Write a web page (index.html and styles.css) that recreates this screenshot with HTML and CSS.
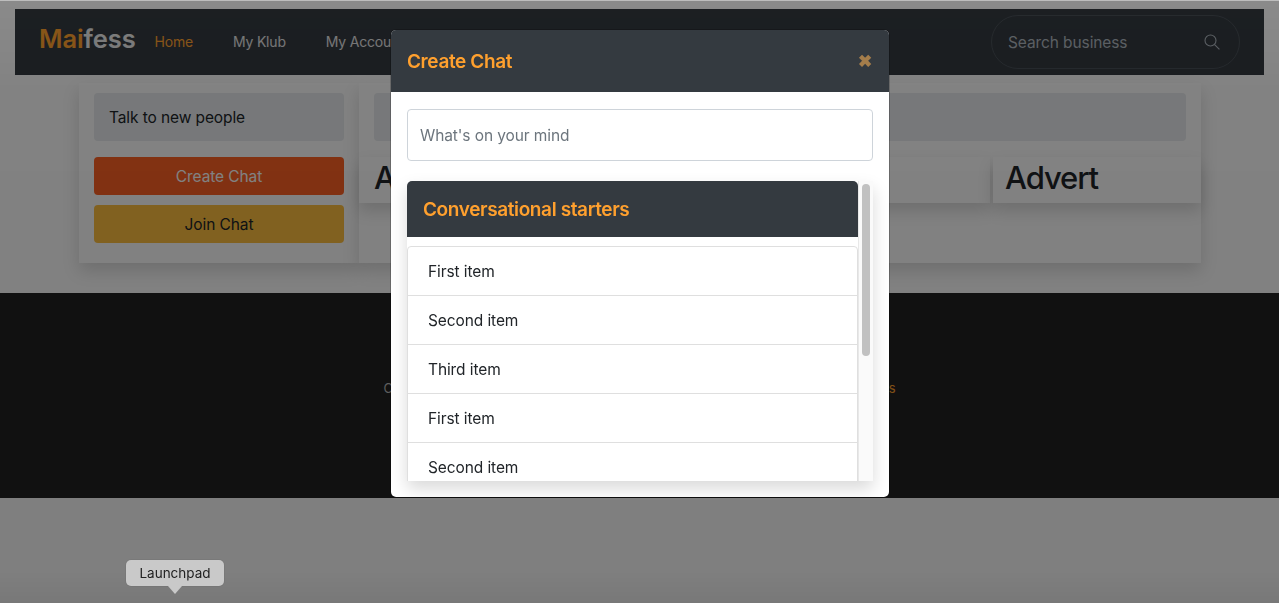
FILE: index.html
```html
<!DOCTYPE html>
<html lang="en">
<head>
    <meta charset="UTF-8">
    <title>Maifess</title>
    <link rel="stylesheet" href="styles.css">
</head>
<body>
<nav class="navbar">
    <a class="brand"><span class="brand-mai">Mai</span>fess</a>
    <ul class="nav-links">
        <li class="active">Home</li>
        <li>My Klub</li>
        <li>My Account</li>
    </ul>
    <div class="search">
        <span class="search-text">Search business</span>
        <svg width="16" height="16" viewBox="0 0 16 16" fill="none" stroke="currentColor" stroke-width="1.1">
            <circle cx="6.5" cy="6.5" r="5.5"/>
            <path d="M10.6 10.6 15.4 15.4"/>
        </svg>
    </div>
</nav>

<div class="content">
    <section class="card card-left">
        <div class="strip">Talk to new people</div>
        <a class="btn btn-create">Create Chat</a>
        <a class="btn btn-join">Join Chat</a>
    </section>
    <section class="card card-right">
        <div class="strip strip-empty"></div>
        <div class="adverts">
            <div class="advert advert-wide">Advert</div>
            <div class="advert advert-small">Advert</div>
        </div>
    </section>
</div>

<footer class="footer">
    <p>Copyright © 2021 Maifess. All rights reserved. Read our <span class="footer-link">Policies, Terms &amp; Conditions</span></p>
</footer>

<div class="backdrop"></div>

<div class="modal">
    <div class="modal-header">
        <h5>Create Chat</h5>
        <span class="close">&#10006;</span>
    </div>
    <div class="modal-body">
        <div class="mind-input">What's on your mind</div>
        <div class="starters">
            <div class="starters-main">
                <div class="starters-title">Conversational starters</div>
                <ul class="starters-list">
                    <li>First item</li>
                    <li>Second item</li>
                    <li>Third item</li>
                    <li>First item</li>
                    <li>Second item</li>
                </ul>
            </div>
            <div class="scroll-track"><div class="scroll-thumb"></div></div>
        </div>
    </div>
</div>

<div class="dock-tip">Launchpad</div>
</body>
</html>
```

FILE: styles.css
```css
* {
    margin: 0;
    padding: 0;
    box-sizing: border-box;
}

html, body {
    height: 603px;
    overflow: hidden;
}

body {
    background: #fff;
    color: #212529;
    font-family: Inter, "Liberation Sans", sans-serif;
    font-size: 15.5px;
    letter-spacing: -.1px;
    border-top: 1px solid #bdbdbd;
}

ul {
    list-style: none;
}

/* navbar */
.navbar {
    display: flex;
    align-items: center;
    height: 66px;
    margin: 8px 15px 0;
    padding: 0 24px 0 24px;
    background: #343a40;
}
.brand {
    font-size: 25.5px;
    font-weight: 600;
    color: #e8e8e8;
    margin-right: 19px;
    margin-top: -8px;
}
.brand-mai {
    color: #ffa02e;
}
.nav-links {
    display: flex;
    gap: 40px;
    font-size: 14px;
    letter-spacing: -.2px;
    color: #e0e0e0;
    flex: 1;
    margin-top: -2px;
}
.nav-links .active {
    color: #ffa02e;
}
.search {
    display: flex;
    align-items: center;
    justify-content: space-between;
    width: 249px;
    height: 54px;
    padding: 0 19px 0 16px;
    border: 1px solid #495057;
    border-radius: 27px;
    color: #adb5bd;
}

/* cards */
.content {
    display: flex;
    width: 1122px;
    height: 180px;
    margin: 8px auto 0 79px;
}
.card {
    background: #fff;
    padding: 10px 15px;
    box-shadow: 0 8px 16px rgba(0, 0, 0, .15);
}
.card-left {
    width: 280px;
}
.card-right {
    flex: 1;
    padding-left: 0;
    padding-right: 0;
}
.strip {
    height: 48px;
    padding: 15px 15px 0;
    background: #e9ecef;
    border-radius: 4px;
}
.strip-empty {
    margin: 0 15px;
}
.btn {
    display: block;
    height: 38px;
    margin-top: 10px;
    line-height: 40px;
    text-align: center;
    border-radius: 4px;
}
.strip + .btn {
    margin-top: 16px;
}
.btn-create {
    background: #ff6224;
    color: #fff;
}
.btn-join {
    background: #ffc040;
}
.adverts {
    display: flex;
    gap: 3px;
    margin-top: 16px;
}
.advert {
    height: 46px;
    padding: 0 12px;
    font-size: 31px;
    font-weight: 500;
    letter-spacing: -1.1px;
    line-height: 41px;
    background: #fff;
    box-shadow: 0 8px 16px rgba(0, 0, 0, .15);
}
.advert-wide {
    width: 631px;
    padding-left: 15px;
}
.advert-small {
    flex: 1;
}

/* footer */
.footer {
    display: flex;
    justify-content: center;
    height: 205px;
    margin-top: 30px;
    padding-top: 87px;
    background: #222;
    color: #bbb;
    font-size: 13px;
}
.footer-link {
    color: #ffa02e;
}

/* modal */
.backdrop {
    position: fixed;
    top: 1px;
    left: 0;
    right: 0;
    bottom: 0;
    background: linear-gradient(rgba(0, 0, 0, .46), rgba(0, 0, 0, .49) 90px, rgba(0, 0, 0, .5) 570px, rgba(0, 0, 0, .53));
}
.modal {
    position: fixed;
    top: 29px;
    left: 390px;
    width: 500px;
    height: 469px;
    background: #fff;
    background-clip: padding-box;
    border: 1px solid rgba(0, 0, 0, .2);
    border-radius: 6px;
    overflow: hidden;
}
.modal-header {
    display: flex;
    align-items: center;
    justify-content: space-between;
    height: 62px;
    padding: 0 17px 0 16px;
    background: #343a40;
    color: #ffa02e;
}
.modal-header h5 {
    font-size: 19px;
    font-weight: 600;
    letter-spacing: -.38px;
}
.close {
    margin-top: -1px;
    font-size: 17px;
    font-weight: 700;
    color: #a47d4b;
}
.modal-body {
    padding: 17px 16px;
}
.mind-input {
    height: 52px;
    padding: 0 12px;
    line-height: 52px;
    color: #6c757d;
    border: 1px solid #ced4da;
    border-radius: 4px;
}
.starters {
    display: flex;
    height: 300px;
    margin-top: 20px;
    background: #fff;
    box-shadow: 0 8px 16px rgba(0, 0, 0, .15);
}
.starters-main {
    flex: 1;
    overflow: hidden;
}
.scroll-track {
    width: 15px;
    padding: 3px 3px 0;
    background: #fafafa;
    border-left: 1px solid #e8e8e8;
}
.scroll-thumb {
    height: 172px;
    background: #c1c1c1;
    border-radius: 4px;
}
.starters-title {
    height: 56px;
    padding: 0 16px;
    line-height: 58px;
    background: #343a40;
    color: #ffa02e;
    font-size: 19px;
    font-weight: 600;
    letter-spacing: -.38px;
    border-radius: 5px 5px 0 0;
}
.starters-list {
    margin-top: 9px;
    border: 1px solid #dfdfdf;
    border-radius: 4px;
}
.starters-list li {
    height: 49px;
    padding: 0 20px;
    line-height: 50px;
    border-bottom: 1px solid #dfdfdf;
}

/* dock tooltip over the screenshot */
.dock-tip {
    position: fixed;
    top: 560px;
    left: 126px;
    width: 98px;
    height: 26px;
    background: #c9c9c9;
    border-radius: 5px;
    box-shadow: 0 0 0 1px rgba(0, 0, 0, .05);
    font-size: 13.5px;
    letter-spacing: 0;
    line-height: 26px;
    text-align: center;
    color: #222;
}
.dock-tip::after {
    content: "";
    position: absolute;
    top: 26px;
    left: 42px;
    border: 7px solid transparent;
    border-top: 8px solid #c9c9c9;
    border-bottom: 0;
}
```
